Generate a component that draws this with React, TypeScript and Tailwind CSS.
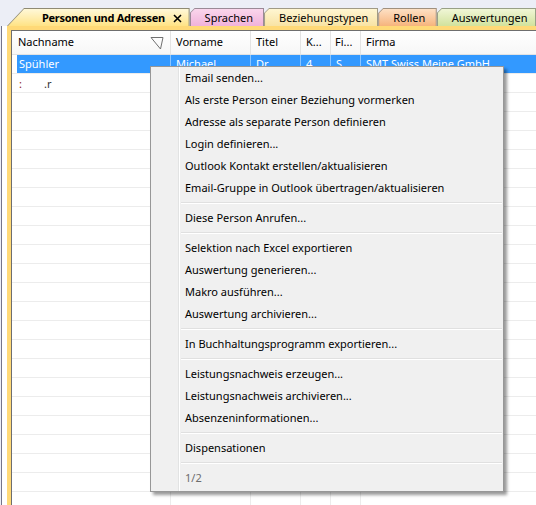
import React from 'react';

const tabs = [
  { label: 'Sprachen', w: 'w-[75px]', outer: 'bg-[#9a8a96]', inner: 'bg-gradient-to-b from-[#fad6ec] to-[#f0b2da]' },
  { label: 'Beziehungstypen', w: 'w-[115px]', outer: 'bg-[#a09a86]', inner: 'bg-gradient-to-b from-[#fff6d2] to-[#f8e3a4]' },
  { label: 'Rollen', w: 'w-[59px]', outer: 'bg-[#a0907e]', inner: 'bg-gradient-to-b from-[#fde0c4] to-[#f6b47c]' },
  { label: 'Auswertungen', w: 'w-[100px]', outer: 'bg-[#98a086]', inner: 'bg-gradient-to-b from-[#f0f6d6] to-[#d2e29c]' },
];

const menu: (string | null)[] = [
  'Email senden...',
  'Als erste Person einer Beziehung vormerken',
  'Adresse als separate Person definieren',
  'Login definieren...',
  'Outlook Kontakt erstellen/aktualisieren',
  'Email-Gruppe in Outlook übertragen/aktualisieren',
  null,
  'Diese Person Anrufen...',
  null,
  'Selektion nach Excel exportieren',
  'Auswertung generieren...',
  'Makro ausführen...',
  'Auswertung archivieren...',
  null,
  'In Buchhaltungsprogramm exportieren...',
  null,
  'Leistungsnachweis erzeugen...',
  'Leistungsnachweis archivieren...',
  'Absenzeninformationen...',
  null,
  'Dispensationen',
  null,
];

function FilterIcon() {
  return (
    <svg width="14" height="14" viewBox="0 0 14 14" className="shrink-0">
      <path d="M1 1.5 H13 L10.5 13 Z" fill="none" stroke="#707070" strokeWidth="1" />
    </svg>
  );
}

export default function App() {
  const emptyRows = Array.from({ length: 22 });

  return (
    <div className="relative w-[536px] h-[505px] overflow-hidden bg-[#eceef6] font-['Noto_Sans',sans-serif] text-[11px] text-black">
      {/* Tabs */}
      <div className="flex h-[26px] pt-[8px] pl-[7px]">
        {/* active tab */}
        <div className="relative w-[184px] h-[18px] bg-[#8f8a74] pt-px pr-px [clip-path:polygon(0_100%,17px_0,100%_0,100%_100%)]">
          <div className="h-full flex items-center pl-[35px] pr-[4px] bg-gradient-to-b from-[#fff8d8] to-[#ffe384] [clip-path:polygon(1px_100%,17px_0,100%_0,100%_100%)]">
            <span className="font-bold leading-none tracking-[-0.3px] whitespace-nowrap">Personen und Adressen</span>
            <svg width="9" height="9" viewBox="0 0 9 9" className="ml-auto mr-[3px] mt-[1px] shrink-0">
              <path d="M1 1 L8 8 M8 1 L1 8" stroke="#000" strokeWidth="1.6" />
            </svg>
          </div>
        </div>
        {tabs.map((t) => (
          <div key={t.label} className={`${t.w} h-[18px] ${t.outer} pt-px pr-px pl-px [clip-path:polygon(0_5px,5px_0,100%_0,100%_100%,0_100%)]`}>
            <div className={`h-full flex items-center pl-[14px] ${t.inner} [clip-path:polygon(0_4px,4px_0,100%_0,100%_100%,0_100%)]`}>
              <span className="leading-none whitespace-nowrap">{t.label}</span>
            </div>
          </div>
        ))}
      </div>

      {/* Frame + grid */}
      <div className="flex h-[479px]">
        <div className="w-px bg-[#eceef6]" />
        <div className="w-px bg-[#74748a]" />
        <div className="w-[5px] bg-white" />
        <div className="flex-1 bg-[#ffd977] pt-[4px] pl-[4px]">
          <div className="h-full bg-white border-t border-l border-[#6e6e6e] overflow-hidden">
            {/* header */}
            <div className="flex h-[24px] border-b border-[#e3e3e3] bg-gradient-to-b from-white to-[#f7f7f7]">
              <div className="w-[159px] flex items-center pl-[6px] pr-[6px] border-r border-[#e3e3e3]">
                <span>Nachname</span>
                <span className="ml-auto"><FilterIcon /></span>
              </div>
              <div className="w-[80px] flex items-center pl-[5px] border-r border-[#e3e3e3]">Vorname</div>
              <div className="w-[50px] flex items-center pl-[5px] border-r border-[#e3e3e3]">Titel</div>
              <div className="w-[30px] flex items-center pl-[5px] border-r border-[#e3e3e3]">K...</div>
              <div className="w-[30px] flex items-center pl-[4px] border-r border-[#e3e3e3]">Fi...</div>
              <div className="flex-1 flex items-center pl-[5px]">Firma</div>
            </div>

            {/* selected row */}
            <div className="flex h-[19px] border-b border-[#ececec]">
              <div className="w-[5px]" />
              <div className="flex-1 flex bg-[#3399ff] text-white">
                <div className="w-[154px] flex items-center pl-[2px] border-r border-[#8cc6ff]">Spühler</div>
                <div className="w-[80px] flex items-center pl-[5px] border-r border-[#8cc6ff]">Michael</div>
                <div className="w-[50px] flex items-center pl-[5px] border-r border-[#8cc6ff]">Dr.</div>
                <div className="w-[30px] flex items-center pl-[5px] border-r border-[#8cc6ff]">4</div>
                <div className="w-[30px] flex items-center pl-[5px] border-r border-[#8cc6ff]">S</div>
                <div className="flex-1 flex items-center pl-[5px] whitespace-nowrap">SMT Swiss Meine GmbH</div>
              </div>
            </div>

            {/* second row */}
            <div className="flex h-[19px] border-b border-[#ececec]">
              <div className="w-[159px] flex items-center pl-[7px] border-r border-[#ececec]">
                <span className="text-[#8b1a1a] leading-none">:</span>
                <span className="ml-[22px] text-[#333] leading-none">.r</span>
              </div>
              <div className="w-[80px] border-r border-[#ececec]" />
              <div className="w-[50px] border-r border-[#ececec]" />
              <div className="w-[30px] border-r border-[#ececec]" />
              <div className="w-[30px] border-r border-[#ececec]" />
              <div className="flex-1" />
            </div>

            {emptyRows.map((_, i) => (
              <div key={i} className="flex h-[19px] border-b border-[#ececec]">
                <div className="w-[159px] border-r border-[#ececec]" />
                <div className="w-[80px] border-r border-[#ececec]" />
                <div className="w-[50px] border-r border-[#ececec]" />
                <div className="w-[30px] border-r border-[#ececec]" />
                <div className="w-[30px] border-r border-[#ececec]" />
                <div className="flex-1" />
              </div>
            ))}
          </div>
        </div>
      </div>

      {/* Context menu */}
      <div className="absolute left-[150px] top-[66px] w-[354px] h-[426px] flex bg-[#f0f0f0] border border-[#979797] shadow-[3px_3px_3px_rgba(0,0,0,0.4)]">
        <div className="w-[28px] border-r border-[#e2e3e3]" />
        <div className="w-px bg-white" />
        <div className="flex-1 flex flex-col pr-px">
          {menu.map((item, i) =>
            item === null ? (
              <div key={i} className="h-[8px] flex flex-col justify-center ml-px">
                <div className="h-px bg-[#e0e0e0]" />
                <div className="h-px bg-white" />
              </div>
            ) : (
              <div key={i} className="h-[22px] flex items-center pl-[5px] whitespace-nowrap">
                {item}
              </div>
            )
          )}
          <div className="h-[22px] flex items-center pl-[5px] text-[#6d6d6d]">1/2</div>
        </div>
      </div>
    </div>
  );
}
